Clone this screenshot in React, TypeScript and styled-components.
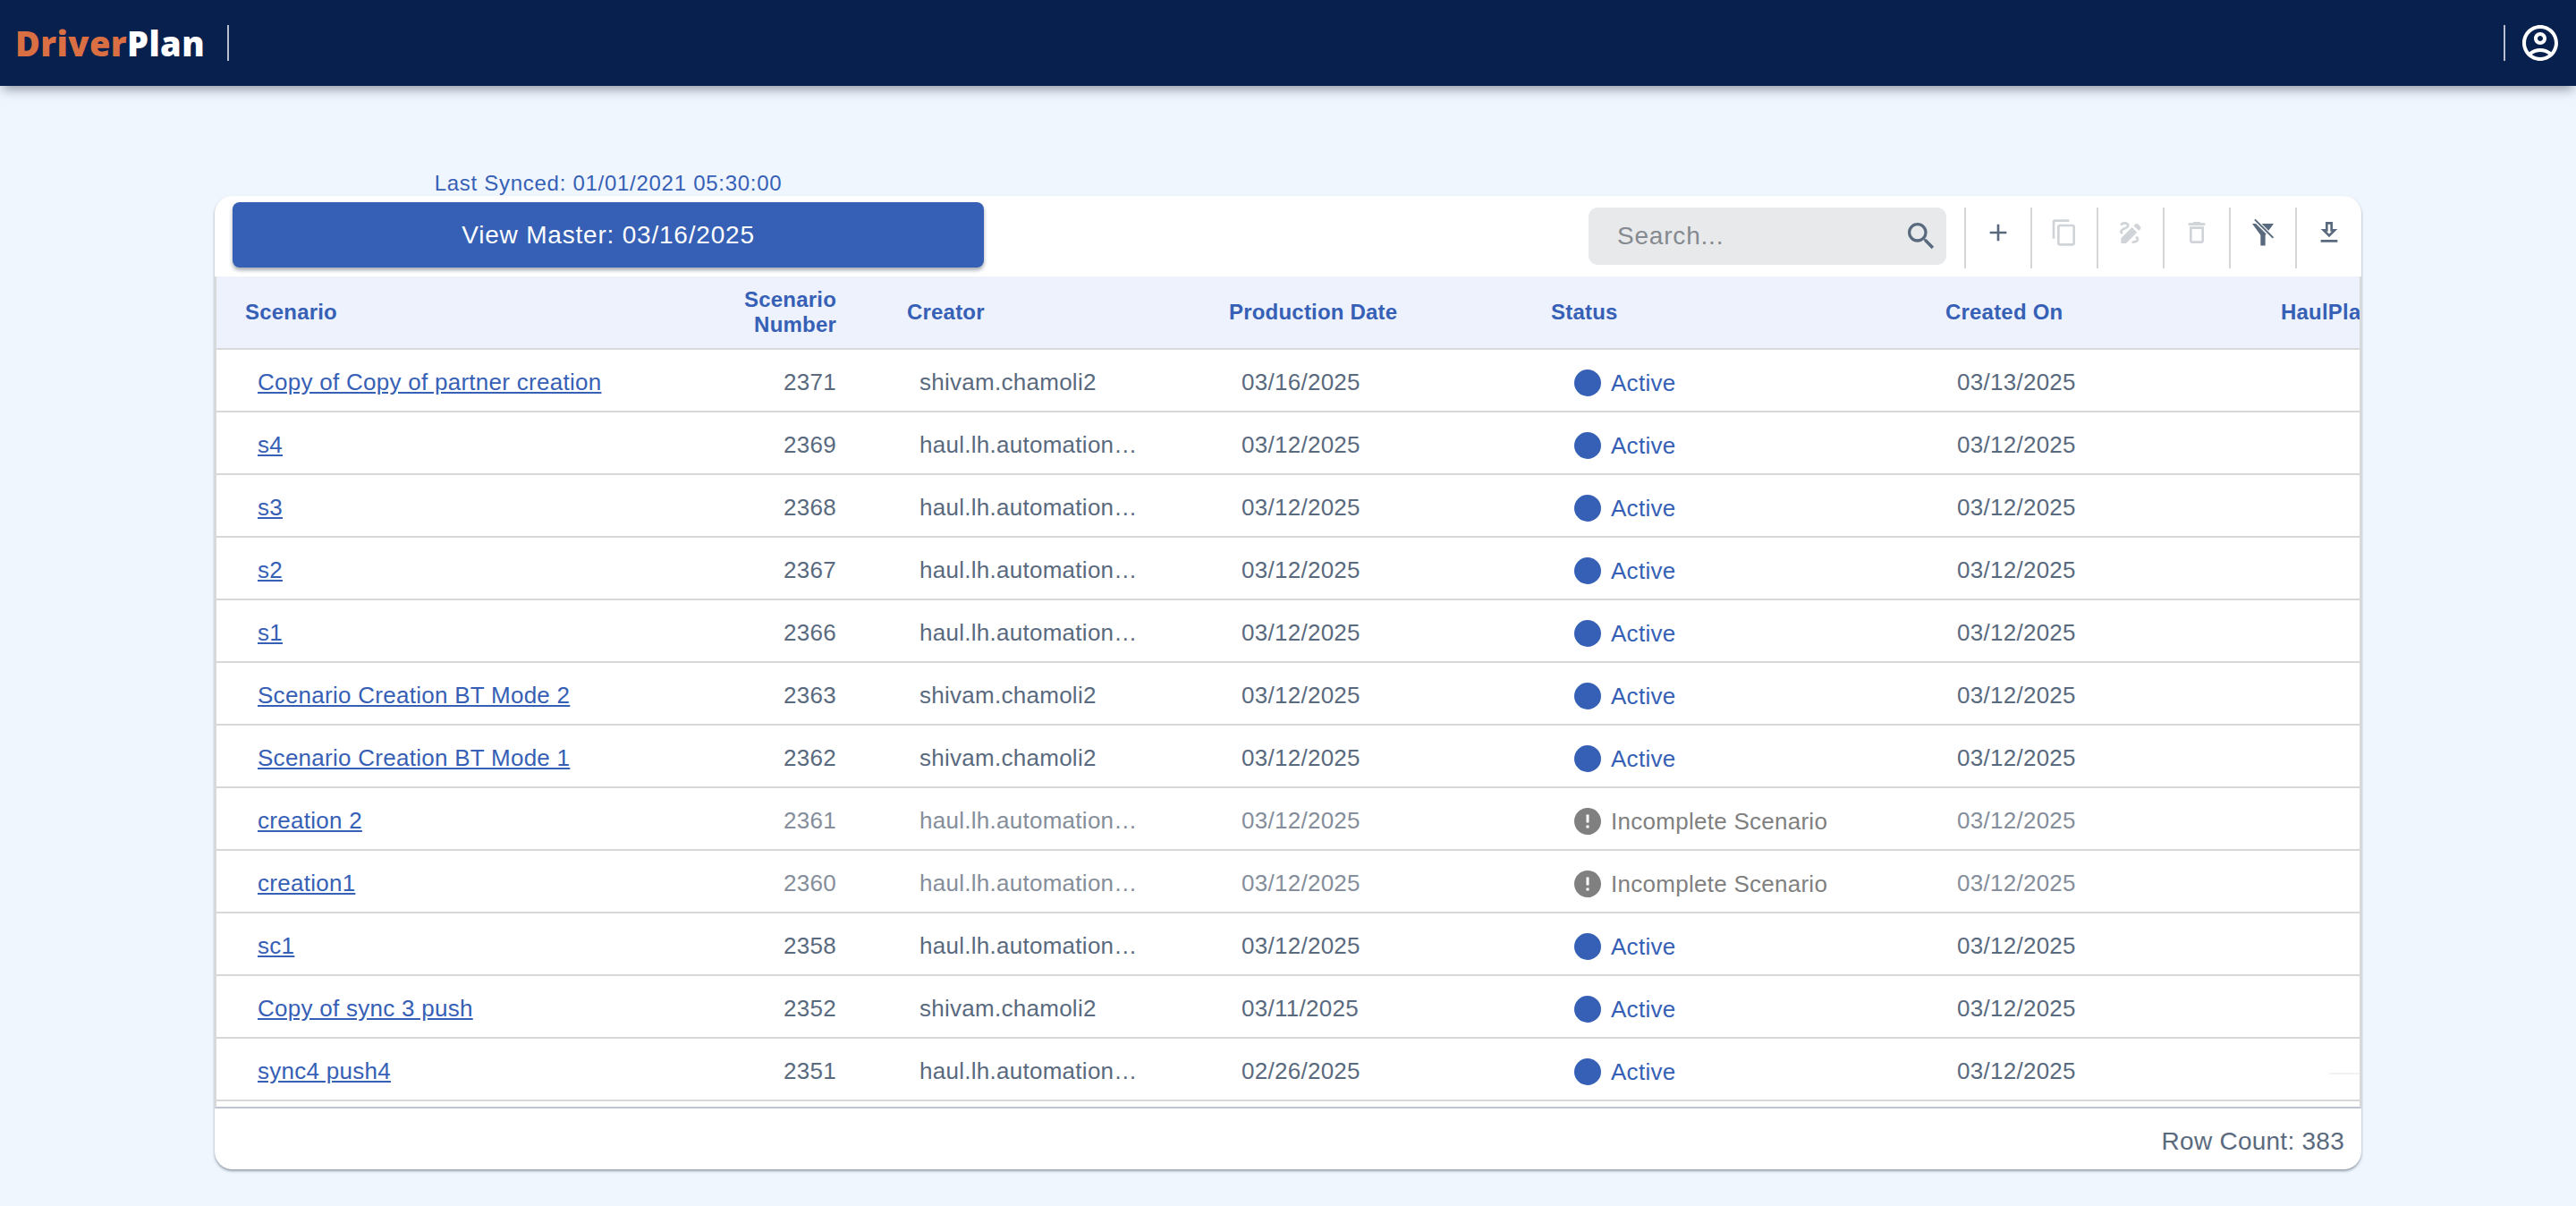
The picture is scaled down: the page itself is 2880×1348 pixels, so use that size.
import styled, { createGlobalStyle } from "styled-components";
import {
  MdAdd,
  MdContentCopy,
  MdDraw,
  MdError,
  MdOutlineAccountCircle,
  MdOutlineDelete,
  MdSearch,
} from "react-icons/md";

const AUTOMATION = "haul.lh.automation…";
const SHIVAM = "shivam.chamoli2";

type Row = {
  name: string;
  number: number;
  creator: string;
  production: string;
  created: string;
  incomplete?: boolean;
};

const rows: Row[] = [
  { name: "Copy of Copy of partner creation", number: 2371, creator: SHIVAM, production: "03/16/2025", created: "03/13/2025" },
  { name: "s4", number: 2369, creator: AUTOMATION, production: "03/12/2025", created: "03/12/2025" },
  { name: "s3", number: 2368, creator: AUTOMATION, production: "03/12/2025", created: "03/12/2025" },
  { name: "s2", number: 2367, creator: AUTOMATION, production: "03/12/2025", created: "03/12/2025" },
  { name: "s1", number: 2366, creator: AUTOMATION, production: "03/12/2025", created: "03/12/2025" },
  { name: "Scenario Creation BT Mode 2", number: 2363, creator: SHIVAM, production: "03/12/2025", created: "03/12/2025" },
  { name: "Scenario Creation BT Mode 1", number: 2362, creator: SHIVAM, production: "03/12/2025", created: "03/12/2025" },
  { name: "creation 2", number: 2361, creator: AUTOMATION, production: "03/12/2025", created: "03/12/2025", incomplete: true },
  { name: "creation1", number: 2360, creator: AUTOMATION, production: "03/12/2025", created: "03/12/2025", incomplete: true },
  { name: "sc1", number: 2358, creator: AUTOMATION, production: "03/12/2025", created: "03/12/2025" },
  { name: "Copy of sync 3 push", number: 2352, creator: SHIVAM, production: "03/11/2025", created: "03/12/2025" },
  { name: "sync4 push4", number: 2351, creator: AUTOMATION, production: "02/26/2025", created: "03/12/2025" },
];

const columnWidths = [520, 220, 360, 360, 441, 375, 300];

function DownloadIcon() {
  return (
    <svg width="32" height="32" viewBox="0 0 24 24" fill="currentColor">
      <path
        fillRule="evenodd"
        d="M19 9h-4V3H9v6H5l7 7 7-7zM11 11V5h2v6h1.17L12 13.17 9.83 11H11zM5 18h14v2H5z"
      />
    </svg>
  );
}

function FilterOffIcon() {
  return (
    <svg width="32" height="32" viewBox="0 0 24 24" fill="currentColor">
      <path d="M3 4.5h18l-7 9.5v8.8h-4v-8.8z" />
      <path d="M5 1l16 16" stroke="#fff" strokeWidth="3.4" />
      <path d="M5.2 1l15.4 15.4" stroke="currentColor" strokeWidth="1.5" />
    </svg>
  );
}

export default function App() {
  return (
    <>
      <GlobalStyle />
      <TopBar>
        <Logo>
          <LogoDriver>Driver</LogoDriver>Plan
        </Logo>
        <BarDivider />
        <Spacer />
        <BarDivider />
        <UserButton>
          <MdOutlineAccountCircle size={48} />
        </UserButton>
      </TopBar>

      <Main>
        <Synced>Last Synced: 01/01/2021 05:30:00</Synced>
        <Panel>
          <Toolbar>
            <MasterButton>View Master: 03/16/2025</MasterButton>
            <Spacer />
            <SearchBox>
              <SearchText>Search...</SearchText>
              <MdSearch size={40} color="#5a6a7e" />
            </SearchBox>
            <ToolButton>
              <MdAdd size={32} />
            </ToolButton>
            <ToolButton $disabled>
              <MdContentCopy size={32} />
            </ToolButton>
            <ToolButton $disabled>
              <MdDraw size={32} />
            </ToolButton>
            <ToolButton $disabled>
              <MdOutlineDelete size={32} />
            </ToolButton>
            <ToolButton>
              <FilterOffIcon />
            </ToolButton>
            <ToolButton>
              <DownloadIcon />
            </ToolButton>
          </Toolbar>

          <TableWrap>
            <Table>
              <colgroup>
                {columnWidths.map((w, i) => (
                  <col key={i} style={{ width: w }} />
                ))}
              </colgroup>
              <thead>
                <tr>
                  <Th>Scenario</Th>
                  <Th $right>
                    Scenario
                    <br />
                    Number
                  </Th>
                  <Th>Creator</Th>
                  <Th>Production Date</Th>
                  <Th>Status</Th>
                  <Th>Created On</Th>
                  <Th>HaulPlan Status</Th>
                </tr>
              </thead>
              <tbody>
                {rows.map((row) => (
                  <tr key={row.number}>
                    <Td>
                      <ScenarioLink href="#">{row.name}</ScenarioLink>
                    </Td>
                    <Td $right $muted={row.incomplete}>
                      {row.number}
                    </Td>
                    <Td $muted={row.incomplete}>{row.creator}</Td>
                    <Td $muted={row.incomplete}>{row.production}</Td>
                    <StatusCell>
                      <Status $incomplete={row.incomplete}>
                        {row.incomplete ? <MdError size={36} /> : <ActiveDot />}
                        {row.incomplete ? "Incomplete Scenario" : "Active"}
                      </Status>
                    </StatusCell>
                    <CreatedCell $muted={row.incomplete}>{row.created}</CreatedCell>
                    <Td />
                  </tr>
                ))}
              </tbody>
            </Table>
            <Sliver />
          </TableWrap>

          <Footer>Row Count: 383</Footer>
        </Panel>
      </Main>
    </>
  );
}

const GlobalStyle = createGlobalStyle`
  html, body {
    margin: 0;
    padding: 0;
    height: 100%;
    background: #eff6fe;
    font-family: "Liberation Sans", Arial, sans-serif;
  }
  * {
    box-sizing: border-box;
  }
`;

const TopBar = styled.header`
  height: 96px;
  background: #07204d;
  display: flex;
  align-items: center;
  padding: 0 16px 0 17px;
  box-shadow: 0 7px 12px -3px rgba(30, 40, 60, 0.45);
  color: #fff;
`;

const Logo = styled.div`
  font-family: "Open Sans", sans-serif;
  font-weight: 800;
  font-size: 38px;
  line-height: 1;
  width: 237px;
  letter-spacing: 0.4px;
`;

const LogoDriver = styled.span`
  color: #d96f42;
`;

const BarDivider = styled.div`
  width: 2px;
  height: 40px;
  background: #b9bfca;
`;

const Spacer = styled.div`
  flex: 1;
`;

const UserButton = styled.div`
  display: flex;
  margin-left: 15px;
`;

const Main = styled.main`
  padding: 94px 240px 0;
`;

const Synced = styled.div`
  width: 840px;
  margin-left: 20px;
  height: 29px;
  line-height: 29px;
  text-align: center;
  font-size: 24px;
  letter-spacing: 0.72px;
  color: #3660b5;
`;

const Panel = styled.section`
  background: #fff;
  border-radius: 20px;
  height: 1088px;
  box-shadow: 0 2px 3px rgba(40, 50, 70, 0.45);
  overflow: hidden;
`;

const Toolbar = styled.div`
  height: 90px;
  display: flex;
  align-items: flex-start;
  padding: 7px 0 0 20px;
`;

const MasterButton = styled.button`
  width: 840px;
  height: 73px;
  border: 0;
  border-radius: 8px;
  background: #3660b5;
  color: #fff;
  font-family: inherit;
  font-size: 28px;
  letter-spacing: 0.8px;
  box-shadow: 0 3px 4px rgba(30, 40, 60, 0.4);
`;

const SearchBox = styled.div`
  width: 400px;
  height: 64px;
  margin-top: 6px;
  margin-right: 20px;
  border-radius: 10px;
  background: #e8e9eb;
  display: flex;
  align-items: center;
  justify-content: space-between;
  padding: 0 8px 0 32px;
`;

const SearchText = styled.span`
  font-size: 28px;
  letter-spacing: 0.8px;
  color: #858a90;
`;

const ToolButton = styled.div<{ $disabled?: boolean }>`
  width: 74px;
  height: 68px;
  margin-top: 6px;
  border-left: 2px solid #d6d6d6;
  display: flex;
  justify-content: center;
  padding-top: 12px;
  color: ${(p) => (p.$disabled ? "#d0d3d8" : "#5a6a7e")};
`;

const TableWrap = styled.div`
  position: relative;
  overflow: hidden;
  height: 930px;
  border-left: 2px solid #d8d9db;
  border-right: 2px solid #d8d9db;
  border-bottom: 2px solid #bcc5d3;
`;

const Table = styled.table`
  table-layout: fixed;
  width: 2576px;
  border-collapse: separate;
  border-spacing: 0;
`;

const Th = styled.th<{ $right?: boolean }>`
  height: 82px;
  padding: 0 ${(p) => (p.$right ? "47px" : "0")} 0 ${(p) => (p.$right ? "0" : "32px")};
  background: #edf2fd;
  border-bottom: 2px solid #d8d9db;
  color: #3660b5;
  font-size: 24px;
  line-height: 28px;
  font-weight: 700;
  letter-spacing: 0.2px;
  white-space: nowrap;
  text-align: ${(p) => (p.$right ? "right" : "left")};
`;

const Td = styled.td<{ $right?: boolean; $muted?: boolean }>`
  height: 70px;
  padding: 4px ${(p) => (p.$right ? "47px" : "0")} 0 ${(p) => (p.$right ? "0" : "46px")};
  border-bottom: 2px solid #d8d8d8;
  font-size: 26px;
  letter-spacing: 0.27px;
  white-space: nowrap;
  text-align: ${(p) => (p.$right ? "right" : "left")};
  color: ${(p) => (p.$muted ? "#858e9a" : "#5a6a7e")};
`;

const StatusCell = styled(Td)`
  padding-left: 58px;
`;

const CreatedCell = styled(Td)`
  padding-left: 45px;
`;

const ScenarioLink = styled.a`
  color: #3660b5;
  text-decoration: underline;
`;

const Status = styled.span<{ $incomplete?: boolean }>`
  position: relative;
  top: 1px;
  display: flex;
  align-items: center;
  gap: 11px;
  color: ${(p) => (p.$incomplete ? "#808080" : "#3660b5")};

  svg {
    margin: 0 -3px;
    flex: none;
  }
`;

const ActiveDot = styled.span`
  width: 30px;
  height: 30px;
  border-radius: 50%;
  background: #3660b5;
`;

const Sliver = styled.div`
  position: absolute;
  left: 2362px;
  right: 0;
  top: 890px;
  height: 2px;
  background: #f2f2f2;
`;

const Footer = styled.div`
  height: 68px;
  display: flex;
  align-items: center;
  justify-content: flex-end;
  padding: 6px 19px 0 0;
  font-size: 28px;
  letter-spacing: 0.26px;
  color: #5a6a7e;
`;
